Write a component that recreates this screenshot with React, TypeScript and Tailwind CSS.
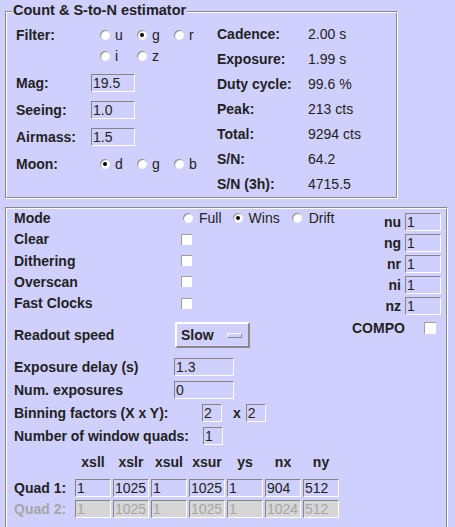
import React from "react";

function Radio({ checked = false }: { checked?: boolean }) {
  return (
    <span className="relative inline-block w-[10px] h-[10px] shrink-0 rounded-full bg-white shadow-[inset_1px_1px_1px_#8a8a8a]">
      {checked && (
        <span className="absolute left-[3px] top-[3px] w-[4px] h-[4px] rounded-full bg-black" />
      )}
    </span>
  );
}

function Check({ size = "w-[11px] h-[11px]" }: { size?: string }) {
  return (
    <span
      className={`inline-block shrink-0 bg-white border-t border-l border-t-[#a0a0a0] border-l-[#a0a0a0] ${size}`}
    />
  );
}

function Field({
  value,
  w,
  disabled = false,
}: {
  value: string;
  w: string;
  disabled?: boolean;
}) {
  return (
    <div
      className={`h-[18px] shrink-0 border border-t-[#858585] border-l-[#858585] border-b-white border-r-white pl-[1px] leading-[16px] text-[14px] overflow-hidden whitespace-nowrap ${w} ${
        disabled ? "bg-[#d6d6d6] text-[#a6a6a6]" : "text-[#222]"
      }`}
    >
      {value}
    </div>
  );
}

function RadioItem({
  label,
  checked = false,
}: {
  label: string;
  checked?: boolean;
}) {
  return (
    <div className="w-[37px] flex items-center">
      <Radio checked={checked} />
      <span className="ml-[5px]">{label}</span>
    </div>
  );
}

export default function App() {
  const stats: [string, string][] = [
    ["Cadence:", "2.00 s"],
    ["Exposure:", "1.99 s"],
    ["Duty cycle:", "99.6 %"],
    ["Peak:", "213 cts"],
    ["Total:", "9294 cts"],
    ["S/N:", "64.2"],
    ["S/N (3h):", "4715.5"],
  ];
  const nrows: [string, string][] = [
    ["nu", "1"],
    ["ng", "1"],
    ["nr", "1"],
    ["ni", "1"],
    ["nz", "1"],
  ];
  const heads = ["xsll", "xslr", "xsul", "xsur", "ys", "nx", "ny"];
  const q1 = ["1", "1025", "1", "1025", "1", "904", "512"];
  const q2 = ["1", "1025", "1", "1025", "1", "1024", "512"];

  return (
    <div className="w-[455px] h-[527px] overflow-hidden bg-[#d0d0ff] text-[#222] font-['Liberation_Sans',Arial,sans-serif] text-[14px] leading-none pt-[11px] pl-[5px]">
      {/* Top fieldset */}
      <div className="relative w-[393px] h-[188px] border border-t-[#888] border-l-[#888] border-r-white border-b-white">
        <div className="h-full border border-t-white border-l-white border-r-[#888] border-b-[#888] flex">
          <div className="w-[210px] pl-[9px] pt-[11px] flex flex-col">
            <div className="h-[21px] flex items-center">
              <span className="w-[75px] font-bold">Filter:</span>
              <div className="ml-[9px] flex">
                <RadioItem label="u" />
                <RadioItem label="g" checked />
                <RadioItem label="r" />
              </div>
            </div>
            <div className="h-[21px] flex items-center">
              <span className="w-[75px]" />
              <div className="ml-[9px] flex">
                <RadioItem label="i" />
                <RadioItem label="z" />
              </div>
            </div>
            <div className="mt-[3px] h-[27px] flex items-center">
              <span className="w-[75px] font-bold">Mag:</span>
              <Field value="19.5" w="w-[44px]" />
            </div>
            <div className="h-[27px] flex items-center">
              <span className="w-[75px] font-bold">Seeing:</span>
              <Field value="1.0" w="w-[44px]" />
            </div>
            <div className="h-[27px] flex items-center">
              <span className="w-[75px] font-bold">Airmass:</span>
              <Field value="1.5" w="w-[44px]" />
            </div>
            <div className="h-[27px] flex items-center">
              <span className="w-[75px] font-bold">Moon:</span>
              <div className="ml-[9px] flex">
                <RadioItem label="d" checked />
                <RadioItem label="g" />
                <RadioItem label="b" />
              </div>
            </div>
          </div>
          <div className="pt-[8px] flex flex-col">
            {stats.map(([k, v]) => (
              <div key={k} className="h-[25px] flex items-center">
                <span className="w-[91px] font-bold">{k}</span>
                <span>{v}</span>
              </div>
            ))}
          </div>
        </div>
        <div className="absolute left-[6px] top-[-10px] px-[1px] bg-[#d0d0ff] font-bold text-[14.5px] leading-[17px]">
          Count &amp; S-to-N estimator
        </div>
      </div>

      {/* Bottom fieldset */}
      <div className="mt-[8px] w-[443px] h-[330px] border border-t-[#888] border-l-[#888] border-r-white border-b-white">
        <div className="h-full border border-t-white border-l-white border-r-[#888] border-b-[#888] flex">
          <div className="flex-1 pl-[7px] flex flex-col">
            <div className="h-[17px] flex items-center">
              <span className="w-[169px] font-bold">Mode</span>
              <Radio />
              <span className="ml-[6px]">Full</span>
              <span className="ml-[11px]">
                <Radio checked />
              </span>
              <span className="ml-[6px]">Wins</span>
              <span className="ml-[12px]">
                <Radio />
              </span>
              <span className="ml-[7px]">Drift</span>
            </div>
            <div className="mt-[2px] h-[22px] flex items-center">
              <span className="w-[167px] font-bold">Clear</span>
              <Check />
            </div>
            <div className="h-[21px] flex items-center">
              <span className="w-[167px] font-bold">Dithering</span>
              <Check />
            </div>
            <div className="h-[21px] flex items-center">
              <span className="w-[167px] font-bold">Overscan</span>
              <Check />
            </div>
            <div className="h-[22px] flex items-center">
              <span className="w-[167px] font-bold">Fast Clocks</span>
              <Check />
            </div>
            <div className="mt-[8px] h-[26px] flex items-center">
              <span className="w-[161px] font-bold">Readout speed</span>
              <div className="w-[75px] h-[26px] border-2 border-t-white border-l-white border-r-[#8a8a8a] border-b-[#8a8a8a] flex items-center pl-[4px]">
                <span className="font-bold">Slow</span>
                <span className="ml-auto mr-[6px] w-[15px] h-[5px] border border-t-white border-l-white border-r-[#8a8a8a] border-b-[#8a8a8a]" />
              </div>
            </div>
            <div className="mt-[10px] h-[18px] flex items-center">
              <span className="w-[160px] font-bold">Exposure delay (s)</span>
              <Field value="1.3" w="w-[60px]" />
            </div>
            <div className="mt-[5px] h-[18px] flex items-center">
              <span className="w-[160px] font-bold">Num. exposures</span>
              <Field value="0" w="w-[60px]" />
            </div>
            <div className="mt-[5px] h-[18px] flex items-center">
              <span className="w-[188px] font-bold">Binning factors (X x Y):</span>
              <Field value="2" w="w-[20px]" />
              <span className="ml-[11px] font-bold">x</span>
              <span className="ml-[5px]">
                <Field value="2" w="w-[20px]" />
              </span>
            </div>
            <div className="mt-[5px] h-[18px] flex items-center">
              <span className="w-[189px] font-bold">Number of window quads:</span>
              <Field value="1" w="w-[20px]" />
            </div>
            <div className="mt-[7px] h-[20px] grid grid-cols-[59px_repeat(7,36px)] gap-x-[2px] items-center">
              <span />
              {heads.map((h) => (
                <span key={h} className="font-bold text-center">
                  {h}
                </span>
              ))}
            </div>
            <div className="mt-[7px] h-[18px] grid grid-cols-[59px_repeat(7,36px)] gap-x-[2px] items-center">
              <span className="font-bold">Quad 1:</span>
              {q1.map((v, i) => (
                <Field key={i} value={v} w="w-[36px]" />
              ))}
            </div>
            <div className="mt-[3px] h-[18px] grid grid-cols-[59px_repeat(7,36px)] gap-x-[2px] items-center">
              <span className="font-bold text-[#a6a6a6]">Quad 2:</span>
              {q2.map((v, i) => (
                <Field key={i} value={v} w="w-[36px]" disabled />
              ))}
            </div>
          </div>
          <div className="w-[89px] mr-[5px] pt-[2px] flex flex-col">
            {nrows.map(([k, v]) => (
              <div key={k} className="h-[21px] flex items-center justify-end">
                <span className="font-bold">{k}</span>
                <span className="ml-[4px]">
                  <Field value={v} w="w-[36px]" />
                </span>
              </div>
            ))}
            <div className="mt-[2px] h-[20px] flex items-center">
              <span className="font-bold">COMPO</span>
              <span className="ml-[19px] flex">
                <Check size="w-[12px] h-[12px]" />
              </span>
            </div>
          </div>
        </div>
      </div>
    </div>
  );
}
